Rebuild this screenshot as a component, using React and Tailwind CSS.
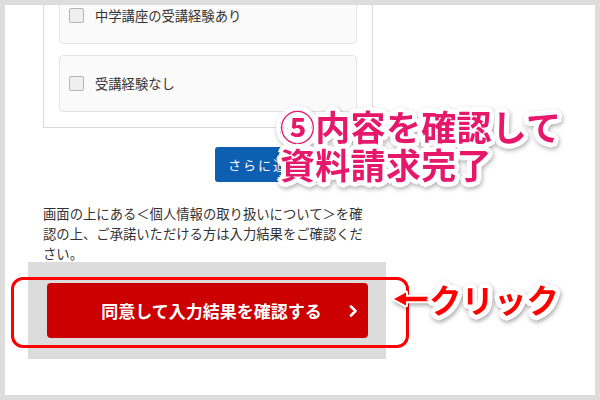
import React from "react";

const outline =
  "[text-shadow:5px_0_0_#fff,4.3px_2.5px_0_#fff,2.5px_4.3px_0_#fff,0_5px_0_#fff,-2.5px_4.3px_0_#fff,-4.3px_2.5px_0_#fff,-5px_0_0_#fff,-4.3px_-2.5px_0_#fff,-2.5px_-4.3px_0_#fff,0_-5px_0_#fff,2.5px_-4.3px_0_#fff,4.3px_-2.5px_0_#fff,3px_0_0_#fff,-3px_0_0_#fff,0_3px_0_#fff,0_-3px_0_#fff]";

function Checkbox() {
  return (
    <span className="block w-[15px] h-[15px] shrink-0 rounded-[2px] border border-[#b5b5b5] bg-[#efefef]" />
  );
}

export default function App() {
  return (
    <div className="w-[600px] h-[400px] bg-[#dddddd] p-[5px] font-['Noto_Sans_CJK_JP',sans-serif]">
      <div className="relative w-[590px] h-[390px] bg-white overflow-hidden">
        {/* form panel */}
        <div className="ml-[38px] w-[330px] border-x border-b border-[#d8d8d8] px-[15px] pb-[15px]">
          <div className="-mt-[18px] h-[57px] rounded-[4px] border border-[#e4e4e4] bg-[#fafafa] flex items-center pl-[9px] gap-[11px]">
            <Checkbox />
            <span className="text-[13.3px] text-[#333]">中学講座の受講経験あり</span>
          </div>
          <div className="mt-[11px] h-[57px] rounded-[4px] border border-[#e4e4e4] bg-[#fafafa] flex items-center pl-[9px] gap-[11px]">
            <Checkbox />
            <span className="text-[13.3px] text-[#333]">受講経験なし</span>
          </div>
        </div>

        {/* blue button */}
        <div className="mt-[19px] ml-[210px] w-[80px] h-[35px] rounded-[3px] bg-[#0c5fb1] flex items-center pl-[13px] overflow-hidden whitespace-nowrap">
          <span className="text-[13px] tracking-[2px] text-white">さらに追加</span>
        </div>

        {/* paragraph */}
        <p className="mt-[22px] ml-[38px] w-[322px] text-[13.33px] leading-[20px] text-[#333]">
          画面の上にある＜個人情報の取り扱いについて＞を確認の上、ご承諾いただける方は入力結果をご確認ください。
        </p>

        {/* gray box with red button */}
        <div className="-mt-[2px] ml-[23px] w-[358px] bg-[#dcdcdc] py-[21px] px-[19px]">
          <div className="relative w-[321px] h-[55px] rounded-[4px] bg-[#cc0000] flex items-center justify-center">
            <span className="text-[17px] font-bold text-white pl-[8px]">同意して入力結果を確認する</span>
            <svg className="absolute right-[10px] top-[22px]" width="9" height="12" viewBox="0 0 9 12">
              <polyline points="2,1.5 6.5,6 2,10.5" fill="none" stroke="#fff" strokeWidth="2.6" strokeLinecap="round" strokeLinejoin="round" />
            </svg>
          </div>
        </div>

        {/* red outline annotation */}
        <div className="absolute left-[6px] top-[272px] w-[398px] h-[71px] rounded-[12px] border-[3px] border-[#ff0000]" />

        {/* クリック */}
        <div className="absolute left-[386px] top-[277px] h-[34px] flex items-center drop-shadow-[1px_2px_2px_rgba(0,0,0,0.35)]">
          <svg width="40" height="20" viewBox="0 0 40 20" className="-mt-[1px]">
            <path d="M3 10 L15 3.5 L15 7.7 L37 7.7 L37 12.3 L15 12.3 L15 16.5 Z" fill="#ff0000" stroke="#fff" strokeWidth="4" strokeLinejoin="round" paintOrder="stroke" />
          </svg>
          <span className={`text-[32.5px] leading-[34px] font-bold text-[#ff0000] -ml-[2px] ${outline}`}>クリック</span>
        </div>

        {/* ⑤ annotation */}
        <div className={`absolute left-[275px] top-[102px] text-[35px] leading-[38px] font-bold tracking-[0.3px] text-[#e6186b] drop-shadow-[1px_2px_2px_rgba(0,0,0,0.3)] ${outline}`}>
          <div>⑤内容を確認して</div>
          <div>資料請求完了</div>
        </div>
      </div>
    </div>
  );
}
